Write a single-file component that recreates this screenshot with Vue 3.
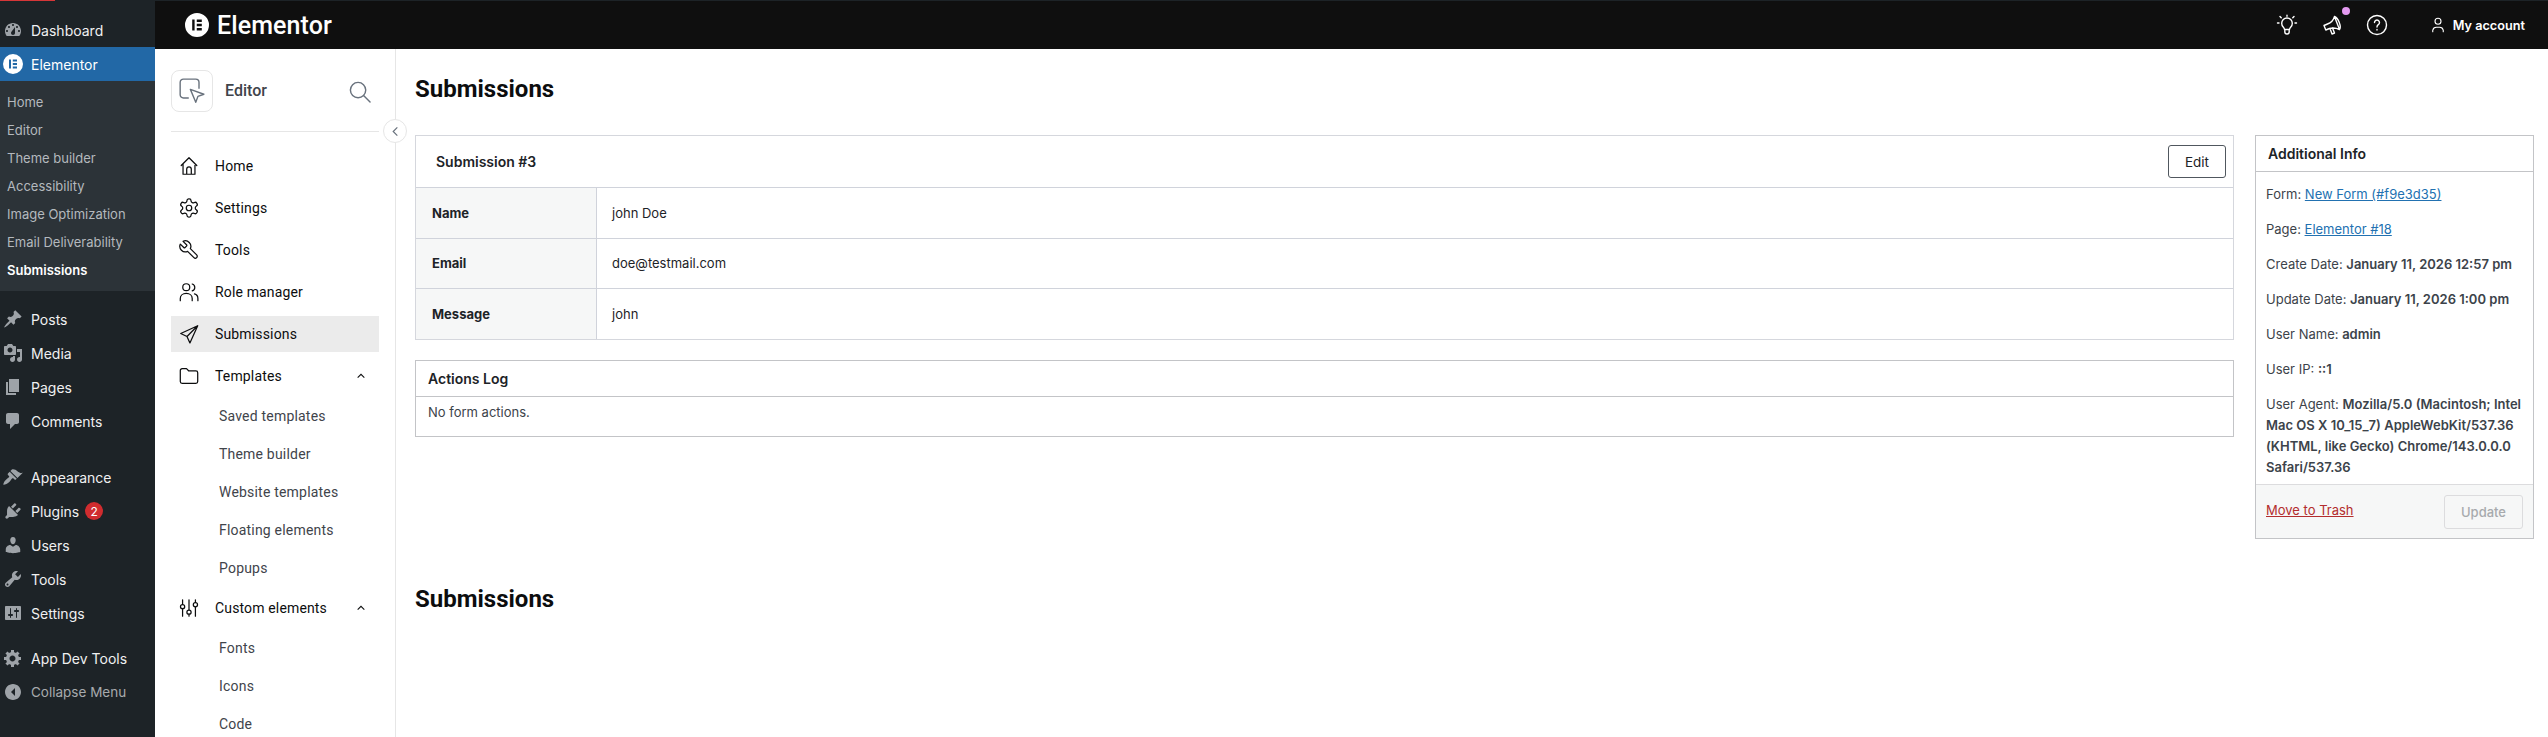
<script setup>
const wpTop = [
  { label: 'Dashboard', d: 'M3.76 16h12.48c1.1-1.37 1.76-3.11 1.76-5 0-4.42-3.58-8-8-8s-8 3.58-8 8c0 1.89.66 3.63 1.76 5zM10 4c.55 0 1 .45 1 1s-.45 1-1 1-1-.45-1-1 .45-1 1-1zM6 6c.55 0 1 .45 1 1s-.45 1-1 1-1-.45-1-1 .45-1 1-1zm8 0c.55 0 1 .45 1 1s-.45 1-1 1-1-.45-1-1 .45-1 1-1zm-5.37 5.55L12 7v6c0 1.1-.9 2-2 2s-2-.9-2-2c0-.57.24-1.08.63-1.45zM4 10c.55 0 1 .45 1 1s-.45 1-1 1-1-.45-1-1 .45-1 1-1zm12 0c.55 0 1 .45 1 1s-.45 1-1 1-1-.45-1-1 .45-1 1-1z' }
]
const wpSub = ['Home', 'Editor', 'Theme builder', 'Accessibility', 'Image Optimization', 'Email Deliverability', 'Submissions']
const wpGroups = [
  [
    { label: 'Posts', d: 'M10.44 3.02l1.82-1.82 6.36 6.35-1.83 1.82c-1.05-.68-2.48-.57-3.41.36l-.75.75c-.92.93-1.04 2.35-.35 3.41l-1.83 1.82-2.41-2.41-2.8 2.79c-.42.42-3.38 2.71-3.8 2.29s1.86-3.39 2.28-3.81l2.79-2.79L4.1 9.36l1.83-1.82c1.05.69 2.48.57 3.4-.36l.75-.75c.93-.92 1.05-2.35.36-3.41z' },
    { label: 'Media', d: 'M13 11V4c0-.55-.45-1-1-1h-1.67L9 1H5L3.67 3H2c-.55 0-1 .45-1 1v7c0 .55.45 1 1 1h10c.55 0 1-.45 1-1zM7 4.5c1.38 0 2.5 1.12 2.5 2.5S8.38 9.5 7 9.5 4.5 8.38 4.5 7 5.62 4.5 7 4.5zM14 6h5v10.5c0 1.38-1.12 2.5-2.5 2.5S14 17.88 14 16.5s1.12-2.5 2.5-2.5c.17 0 .34.02.5.05V9h-3V6zm-4 8.05V13h2v3.5c0 1.38-1.12 2.5-2.5 2.5S7 17.88 7 16.5 8.12 14 9.5 14c.17 0 .34.02.5.05z' },
    { label: 'Pages', d: 'M6 15V2h10v13H6zm-1 1h8v2H3V5h2v11z' },
    { label: 'Comments', d: 'M5 2h9c1.1 0 2 .9 2 2v7c0 1.1-.9 2-2 2h-2l-5 5v-5H5c-1.1 0-2-.9-2-2V4c0-1.1.9-2 2-2z' }
  ],
  [
    { label: 'Appearance', d: 'M14.48 11.06L7.41 3.99l1.5-1.5c.5-.56 2.3-.47 3.51.32 1.21.8 1.43 1.28 2.91 2.1 1.18.64 2.45 1.26 4.45.85zm-.71.71L6.7 4.7 4.93 6.47c-.39.39-.39 1.02 0 1.41l1.06 1.06c.39.39.39 1.03 0 1.42-.6.6-1.43 1.11-2.21 1.69-.35.26-.7.53-1.01.84C1.43 13.71 0 17.2.5 17.7s3.98-.93 6.03-2.98c.31-.31.58-.66.84-1.01.58-.78 1.09-1.61 1.69-2.21.39-.39 1.02-.39 1.41 0l1.06 1.06c.39.39 1.02.39 1.41 0z' },
    { label: 'Plugins', badge: '2', d: 'M13.11 4.36L9.87 7.6 8 5.73l3.24-3.24c.35-.34 1.05-.2 1.56.32.52.51.66 1.21.31 1.55zm-8 1.77l.91-1.12 9.01 9.01-1.19.84c-.71.71-2.63 1.16-3.82 1.16H6.14L4.9 17.26c-.59.59-1.54.59-2.12 0-.59-.58-.59-1.53 0-2.12l1.24-1.24v-3.88c0-1.13.4-3.19 1.09-3.89zm7.26 3.97l3.24-3.24c.34-.35 1.04-.21 1.55.31.52.51.66 1.21.31 1.55l-3.24 3.25z' },
    { label: 'Users', d: 'M10 9.25c-2.27 0-2.73-3.44-2.73-3.44C7 4.02 7.82 2 9.97 2c2.16 0 2.98 2.02 2.71 3.81 0 0-.41 3.44-2.68 3.44zm0 2.57L12.72 10c2.39 0 4.52 2.33 4.52 4.53v2.49s-3.65 1.13-7.24 1.13c-3.65 0-7.24-1.13-7.24-1.13v-2.49c0-2.25 1.94-4.48 4.47-4.48z' },
    { label: 'Tools', d: 'M16.68 9.77c-1.34 1.34-3.3 1.67-4.95.99l-5.41 6.52c-.99.99-2.59.99-3.58 0s-.99-2.59 0-3.57l6.52-5.42c-.68-1.65-.35-3.61.99-4.95 1.28-1.28 3.12-1.62 4.72-1.06l-2.89 2.89 2.82 2.82 2.86-2.87c.53 1.58.18 3.39-1.08 4.65zM3.81 16.21c.4.39 1.04.39 1.43 0 .4-.4.4-1.04 0-1.43-.39-.4-1.03-.4-1.43 0-.39.39-.39 1.03 0 1.43z' },
    { label: 'Settings', d: 'M18 16V4c0-.55-.45-1-1-1H3c-.55 0-1 .45-1 1v12c0 .55.45 1 1 1h14c.55 0 1-.45 1-1zM8 11h1c.55 0 1 .45 1 1s-.45 1-1 1H8v1.5c0 .28-.22.5-.5.5s-.5-.22-.5-.5V13H6c-.55 0-1-.45-1-1s.45-1 1-1h1V5.5c0-.28.22-.5.5-.5s.5.22.5.5V11zm5-2h-1c-.55 0-1-.45-1-1s.45-1 1-1h1V5.5c0-.28.22-.5.5-.5s.5.22.5.5V7h1c.55 0 1 .45 1 1s-.45 1-1 1h-1v5.5c0 .28-.22.5-.5.5s-.5-.22-.5-.5V9z' }
  ],
  [
    { label: 'App Dev Tools', d: 'M18 12h-2.18c-.17.7-.44 1.35-.81 1.93l1.54 1.54-2.1 2.1-1.54-1.54c-.58.36-1.23.63-1.91.79V19H8v-2.18c-.68-.16-1.33-.43-1.91-.79l-1.54 1.54-2.12-2.12 1.54-1.54c-.36-.58-.63-1.23-.79-1.91H1V9.03h2.17c.16-.7.44-1.35.8-1.94L2.43 5.55l2.1-2.1 1.54 1.54c.58-.37 1.24-.64 1.93-.81V2h3v2.18c.68.16 1.33.43 1.91.79l1.54-1.54 2.12 2.12-1.54 1.54c.36.59.64 1.24.8 1.94H18V12zm-8.5 1.5c1.66 0 3-1.34 3-3s-1.34-3-3-3-3 1.34-3 3 1.34 3 3 3z' },
    { label: 'Collapse Menu', muted: true, d: 'M18 10c0-4.42-3.58-8-8-8s-8 3.58-8 8 3.58 8 8 8 8-3.58 8-8zM8 10l4-4v8z' }
  ]
]
const navTop = [
  { label: 'Home', d: 'M3.500 11.500 12 3l8.500 8.500M5.500 9.500V21h13V9.500M9.500 21v-5.500a2.500 2.500 0 0 1 5 0V21' },
  { label: 'Settings', d: 'M12.220 2h-.44a2 2 0 0 0-2 2v.18a2 2 0 0 1-1 1.730l-.43.25a2 2 0 0 1-2 0l-.15-.08a2 2 0 0 0-2.730.73l-.22.38a2 2 0 0 0 .73 2.730l.15.1a2 2 0 0 1 1 1.720v.51a2 2 0 0 1-1 1.740l-.15.09a2 2 0 0 0-.73 2.730l.22.38a2 2 0 0 0 2.730.73l.15-.08a2 2 0 0 1 2 0l.43.25a2 2 0 0 1 1 1.730V20a2 2 0 0 0 2 2h.44a2 2 0 0 0 2-2v-.18a2 2 0 0 1 1-1.730l.43-.25a2 2 0 0 1 2 0l.15.08a2 2 0 0 0 2.730-.73l.22-.39a2 2 0 0 0-.73-2.730l-.15-.08a2 2 0 0 1-1-1.740v-.5a2 2 0 0 1 1-1.740l.15-.09a2 2 0 0 0 .73-2.730l-.22-.38a2 2 0 0 0-2.730-.73l-.15.08a2 2 0 0 1-2 0l-.43-.25a2 2 0 0 1-1-1.730V4a2 2 0 0 0-2-2zM12 9a3 3 0 1 0 0 6 3 3 0 0 0 0-6z' },
  { label: 'Tools', flip: true, d: 'M14.700 6.300a1 1 0 0 0 0 1.400l1.600 1.600a1 1 0 0 0 1.400 0l3.770-3.770a6 6 0 0 1-7.940 7.940l-6.910 6.910a2.120 2.120 0 0 1-3-3l6.910-6.910a6 6 0 0 1 7.940-7.940l-3.760 3.760z' },
  { label: 'Role manager', d: 'M9 3a3.800 3.800 0 1 1 0 7.600A3.800 3.800 0 0 1 9 3zM2.500 21.500v-2.500c0-3 2.500-5.500 6.500-5.500s6.500 2.500 6.500 5.500v2.500M15.500 3.300c1.800.5 2.800 2 2.800 3.700s-1 3.200-2.800 3.700M18 14c2.200.6 3.700 2.500 3.700 5v2.500' },
  { label: 'Submissions', active: true, d: 'M21.500 3 3 11.500l6.800 3.200 3.200 7zM21.500 3 9.800 14.700' },
  { label: 'Templates', caret: true, tight: true, d: 'M2.500 6a2 2 0 0 1 2-2h4.800l2.500 2.500h7.700a2 2 0 0 1 2 2V18a2 2 0 0 1-2 2h-15a2 2 0 0 1-2-2z' }
]
const tplSub = ['Saved templates', 'Theme builder', 'Website templates', 'Floating elements', 'Popups']
const customSub = ['Fonts', 'Icons', 'Code']
const rows = [
  ['Name', 'john Doe'],
  ['Email', 'doe@testmail.com'],
  ['Message', 'john']
]
const info = [
  ['Create Date:', 'January 11, 2026 12:57 pm'],
  ['Update Date:', 'January 11, 2026 1:00 pm'],
  ['User Name:', 'admin'],
  ['User IP:', '::1'],
  ['User Agent:', 'Mozilla/5.0 (Macintosh; Intel Mac OS X 10_15_7) AppleWebKit/537.36 (KHTML, like Gecko) Chrome/143.0.0.0 Safari/537.36']
]
</script>

<template>
  <div class="page">
    <aside class="wp">
      <div class="wp-loader"></div>
      <ul class="wp-list">
        <li v-for="i in wpTop" :key="i.label" class="wp-item">
          <svg class="wp-ico" viewBox="0 0 20 20"><path fill-rule="evenodd" :d="i.d" /></svg>{{ i.label }}
        </li>
        <li class="wp-item current">
          <svg class="wp-logo" viewBox="0 0 20 20"><path fill-rule="evenodd" d="M10 0a10 10 0 1 0 0 20 10 10 0 0 0 0-20zM6 5.500H8v9H6zM9.800 5.500H14v1.900H9.800zM9.800 9.050H14v1.900H9.800zM9.800 12.600H14v1.900H9.800z" /></svg>Elementor
        </li>
      </ul>
      <ul class="wp-sub">
        <li v-for="s in wpSub" :key="s" :class="{ strong: s === 'Submissions' }">{{ s }}</li>
      </ul>
      <ul v-for="(g, n) in wpGroups" :key="n" class="wp-list group">
        <li v-for="i in g" :key="i.label" class="wp-item" :class="{ muted: i.muted }">
          <svg class="wp-ico" viewBox="0 0 20 20"><path fill-rule="evenodd" :d="i.d" /></svg>{{ i.label }}
          <span v-if="i.badge" class="badge">{{ i.badge }}</span>
        </li>
      </ul>
    </aside>

    <div class="right">
      <header class="top">
        <div class="brand">
          <svg class="brand-logo" viewBox="0 0 20 20"><path fill-rule="evenodd" d="M10 0a10 10 0 1 0 0 20 10 10 0 0 0 0-20zM6 5.500H8v9H6zM9.800 5.500H14v1.900H9.800zM9.800 9.050H14v1.900H9.800zM9.800 12.600H14v1.900H9.800z" /></svg>
          <span>Elementor</span>
        </div>
        <div class="top-actions">
          <svg class="t-ico bulb" viewBox="0 0 24 24"><path d="M8.200 14a5.300 5.300 0 1 1 7.600 0c-.8.800-1.200 1.500-1.300 2.500h-5c-.1-1-.5-1.700-1.300-2.500zM9.800 16.500v2.300a2.200 2.200 0 0 0 4.400 0v-2.300M12 2.200v1M2.500 10h1.500M20 10h1.500M5 3.500 6.200 4.800M19 3.500 17.800 4.800" /></svg>
          <span class="megaphone">
            <svg class="t-ico" viewBox="0 0 24 24"><path d="M3 12.500 4.800 17l3.700-1.500c3.500-1 6.500-.7 10 1L13.500 3.500c-1 3.500-3.500 6.300-7 7.500zM13.500 3.500A3 7.200-22 0 1 18.500 16.500M9 15.500 11 21l2.500-1-2-5" /></svg>
            <i class="dot"></i>
          </span>
          <svg class="t-ico" viewBox="0 0 24 24"><circle cx="12" cy="12" r="9.500" /><path d="M9.500 9.500a2.500 2.500 0 1 1 3.800 2.100c-.9.600-1.300 1.100-1.300 2.400M12 16.500v.6" /></svg>
          <div class="account">
            <svg class="a-ico" viewBox="0 0 24 24"><circle cx="12" cy="7" r="4" /><path d="M5 21v-2a5 5 0 0 1 5-4h4a5 5 0 0 1 5 4v2" /></svg>
            <span>My account</span>
          </div>
        </div>
      </header>

      <div class="body">
        <nav class="side">
          <div class="side-head">
            <div class="tile">
              <svg viewBox="0 0 26 26"><path d="M10 19.500H5a3 3 0 0 1-3-3V5a3 3 0 0 1 3-3h11.500a3 3 0 0 1 3 3v6" /><path d="M11.500 11.500 24 16l-5.500 2-2 5.500z" /></svg>
            </div>
            <span class="side-title">Editor</span>
            <svg class="search" viewBox="0 0 24 24"><circle cx="10.500" cy="10.500" r="8" /><path d="M16.500 16.500 23 23" /></svg>
          </div>
          <div class="collapse">
            <svg viewBox="0 0 12 12"><path d="M8 1.500 3.500 6 8 10.500" /></svg>
          </div>
          <ul class="nav">
            <li v-for="n in navTop" :key="n.label" class="nav-item" :class="{ active: n.active, tight: n.tight }">
              <svg class="n-ico" :class="{ flip: n.flip }" viewBox="0 0 24 24"><path :d="n.d" /></svg>
              <span class="n-label">{{ n.label }}</span>
              <svg v-if="n.caret" class="caret" viewBox="0 0 12 12"><path d="M2 8 6 4l4 4" /></svg>
            </li>
            <li v-for="s in tplSub" :key="s" class="nav-sub">{{ s }}</li>
            <li class="nav-item custom">
              <svg class="n-ico" viewBox="0 0 24 24"><path d="M5 3v5M5 13v8M12 3v11M12 19v2M19 3v3M19 11v10" /><circle cx="5" cy="10.500" r="2.300" /><circle cx="12" cy="16.500" r="2.300" /><circle cx="19" cy="8.500" r="2.300" /></svg>
              <span class="n-label">Custom elements</span>
              <svg class="caret" viewBox="0 0 12 12"><path d="M2 8 6 4l4 4" /></svg>
            </li>
            <li v-for="s in customSub" :key="s" class="nav-sub">{{ s }}</li>
          </ul>
        </nav>

        <main class="main">
          <h1 class="title">Submissions</h1>
          <div class="columns">
            <div class="col-main">
              <section class="card">
                <div class="card-head">
                  <span>Submission #3</span>
                  <button class="edit">Edit</button>
                </div>
                <div v-for="r in rows" :key="r[0]" class="row">
                  <div class="cell-k">{{ r[0] }}</div>
                  <div class="cell-v">{{ r[1] }}</div>
                </div>
              </section>
              <section class="log">
                <div class="log-head">Actions Log</div>
                <div class="log-body">No form actions.</div>
              </section>
            </div>
            <aside class="info">
              <div class="info-head">Additional Info</div>
              <div class="info-body">
                <p>Form: <a>New Form (#f9e3d35)</a></p>
                <p>Page: <a>Elementor #18</a></p>
                <p v-for="i in info" :key="i[0]">{{ i[0] }} <b>{{ i[1] }}</b></p>
              </div>
              <div class="info-foot">
                <a class="trash">Move to Trash</a>
                <button class="update">Update</button>
              </div>
            </aside>
          </div>
          <h2 class="title second">Submissions</h2>
        </main>
      </div>
    </div>
  </div>
</template>

<style>
html, body { margin: 0; height: 737px; overflow: hidden; background: #fff; }
</style>

<style scoped>
.page { display: flex; width: 2548px; height: 737px; overflow: hidden; font-family: Inter, sans-serif; }
ul { list-style: none; margin: 0; padding: 0; }

.wp { width: 155px; flex: none; background: #1d2327; position: relative; padding-top: 13px; box-sizing: border-box; }
.wp-loader { position: absolute; left: 0; top: 0; width: 55px; height: 1px; background: #d63638; }
.wp-item { height: 34px; display: flex; align-items: center; color: #f0f0f1; font-size: 14px; padding-left: 31px; position: relative; }
.wp-item.current { background: #2268a6; color: #fff; }
.wp-item.muted { color: #a7aaad; font-size: 13.5px; }
.wp-ico { position: absolute; left: 3px; top: 7px; width: 20px; height: 20px; fill: #9ea3a8; }
.wp-logo { position: absolute; left: 3px; top: 7px; width: 20px; height: 20px; fill: #fff; }
.wp-sub { background: #2c3338; padding: 7px 0; height: 196px; }
.wp-sub li { height: 28px; line-height: 28px; padding-left: 7px; font-size: 13px; color: #b4b9be; }
.wp-sub li.strong { color: #fff; font-weight: 600; }
.group { margin-top: 11px; }
.group + .group { margin-top: 22px; }
.group:last-of-type { margin-top: 11px; }
.badge { width: 18px; height: 18px; border-radius: 50%; background: #d02c2f; color: #fff; font-size: 12px; display: flex; align-items: center; justify-content: center; margin-left: 6px; }

.right { flex: 1; display: flex; flex-direction: column; min-width: 0; }
.top { height: 49px; flex: none; background: #0f0f0f; border-top: 1px solid #1d2327; box-sizing: border-box; display: flex; align-items: center; justify-content: space-between; color: #fff; padding: 0 23px 0 30px; }
.brand { display: flex; align-items: center; gap: 8px; font-family: Roboto, sans-serif; font-size: 25px; font-weight: 500; letter-spacing: .1px; }
.brand-logo { width: 24px; height: 24px; fill: #fff; }
.top-actions { display: flex; align-items: center; }
.t-ico { width: 24px; height: 24px; display: block; fill: none; stroke: #fff; stroke-width: 1.4; stroke-linecap: round; stroke-linejoin: round; }
.bulb { margin-right: 22px; }
.megaphone { position: relative; margin-right: 20px; display: block; }
.dot { position: absolute; right: -5px; top: -6px; width: 8px; height: 8px; border-radius: 50%; background: #e49af0; }
.account { display: flex; align-items: center; gap: 6px; margin-left: 40px; font-size: 12.7px; font-weight: 600; }
.a-ico { width: 18px; height: 18px; fill: none; stroke: #fff; stroke-width: 1.5; stroke-linecap: round; }

.body { flex: 1; display: flex; min-height: 0; }
.side { width: 241px; flex: none; box-sizing: border-box; border-right: 1px solid #e6e6e6; padding: 21px 16px 0; position: relative; background: #fff; }
.side-head { display: flex; align-items: center; height: 42px; padding-bottom: 19px; border-bottom: 1px solid #e6e6e6; }
.tile { width: 42px; height: 42px; box-sizing: border-box; border: 1px solid #e6e6e6; border-radius: 8px; display: flex; align-items: center; justify-content: center; }
.tile svg { width: 28px; height: 28px; fill: none; stroke: #69727d; stroke-width: 1.3; stroke-linejoin: round; }
.side-title { margin-left: 12px; padding-bottom: 2px; font-family: Roboto, sans-serif; font-weight: 500; font-size: 16px; color: #3f444b; flex: 1; }
.search { width: 23px; height: 23px; margin-right: 8px; fill: none; stroke: #69727d; stroke-width: 1.5; stroke-linecap: round; }
.collapse { position: absolute; left: 228px; top: 70px; width: 24px; height: 24px; border-radius: 50%; border: 1px solid #e6e6e6; background: #fff; box-sizing: border-box; display: flex; align-items: center; justify-content: center; z-index: 2; }
.collapse svg { width: 11px; height: 11px; fill: none; stroke: #69727d; stroke-width: 1.3; }
.nav { margin-top: 16px; font-family: Roboto, sans-serif; color: #0c0d0e; }
.nav-item { height: 36px; margin-bottom: 6px; display: flex; align-items: center; padding: 0 0 0 7px; position: relative; font-size: 14px; letter-spacing: .15px; }
.nav-item.active { background: #ebebeb; }
.nav-item.tight { margin-bottom: 3px; }
.n-ico { width: 22px; height: 22px; flex: none; fill: none; stroke: #0c0d0e; stroke-width: 1.35; stroke-linecap: round; stroke-linejoin: round; }
.n-ico.flip { transform: scaleX(-1); }
.n-label { margin-left: 15px; flex: 1; }
.caret { width: 10px; height: 10px; margin-right: 13px; fill: none; stroke: #0c0d0e; stroke-width: 1.3; }
.nav-sub { height: 38px; line-height: 38px; padding-left: 48px; font-size: 14px; color: #3f444b; letter-spacing: .2px; }
.nav-item.custom { margin-top: 3px; margin-bottom: 3px; }

.main { flex: 1; min-width: 0; padding: 0 14px 0 19px; }
.title { margin: 0; font-family: Roboto, sans-serif; font-size: 24px; font-weight: 700; color: #0c0d0e; line-height: 28px; padding-top: 26px; }
.columns { display: flex; gap: 21px; margin-top: 32px; }
.col-main { flex: 1; min-width: 0; }
.card { border: 1px solid #d5d7dd; }
.card-head { height: 51px; display: flex; align-items: center; justify-content: space-between; padding: 0 7px 0 20px; font-size: 14px; font-weight: 600; color: #1d2327; }
.edit { height: 33px; width: 58px; background: #fff; border: 1px solid #50575e; border-radius: 3px; font-family: inherit; font-size: 13.5px; color: #1d2327; padding: 0; }
.row { display: flex; height: 50px; border-top: 1px solid #d0d3db; box-sizing: border-box; font-size: 13px; }
.row:nth-child(2) { height: 51px; }
.row:last-child { height: 51px; }
.cell-k { width: 164px; background: #f6f7f7; border-right: 1px solid #d0d3db; padding: 0 0 1px 16px; display: flex; align-items: center; font-weight: 700; color: #1d2327; }
.cell-v { padding: 0 0 1px 15px; display: flex; align-items: center; color: #1d2327; }
.log { margin-top: 20px; border: 1px solid #c3c4c7; }
.log-head { height: 35px; line-height: 35px; padding-left: 12px; font-size: 14px; font-weight: 600; color: #1d2327; border-bottom: 1px solid #c3c4c7; }
.log-body { height: 39px; padding: 7px 12px 0; box-sizing: border-box; font-size: 13px; color: #3c434a; }
.info { width: 279px; flex: none; box-sizing: border-box; border: 1px solid #c3c4c7; font-size: 13px; color: #3c434a; align-self: flex-start; }
.info-head { height: 35px; line-height: 35px; padding-left: 12px; font-size: 14px; font-weight: 600; color: #1d2327; border-bottom: 1px solid #c3c4c7; }
.info-body { padding: 12px 10px 0; }
.info-body p { margin: 0 0 14px; line-height: 21px; }
.info-body p:last-child { margin-bottom: 0; }
.info-body a { color: #2271b1; text-decoration: underline; }
.info-body b { font-weight: 600; }
.info-foot { margin-top: 6px; height: 53px; border-top: 1px solid #dcdcde; background: #f6f7f7; display: flex; align-items: center; justify-content: space-between; padding: 0 10px 0 10px; }
.trash { color: #b32d2e; text-decoration: underline; margin-top: -3px; }
.update { width: 79px; height: 34px; background: #f6f7f7; border: 1px solid #dcdcde; border-radius: 3px; color: #a7aaad; font-family: inherit; font-size: 13px; font-weight: 500; padding: 0; }
.second { padding-top: 46px; }
</style>
